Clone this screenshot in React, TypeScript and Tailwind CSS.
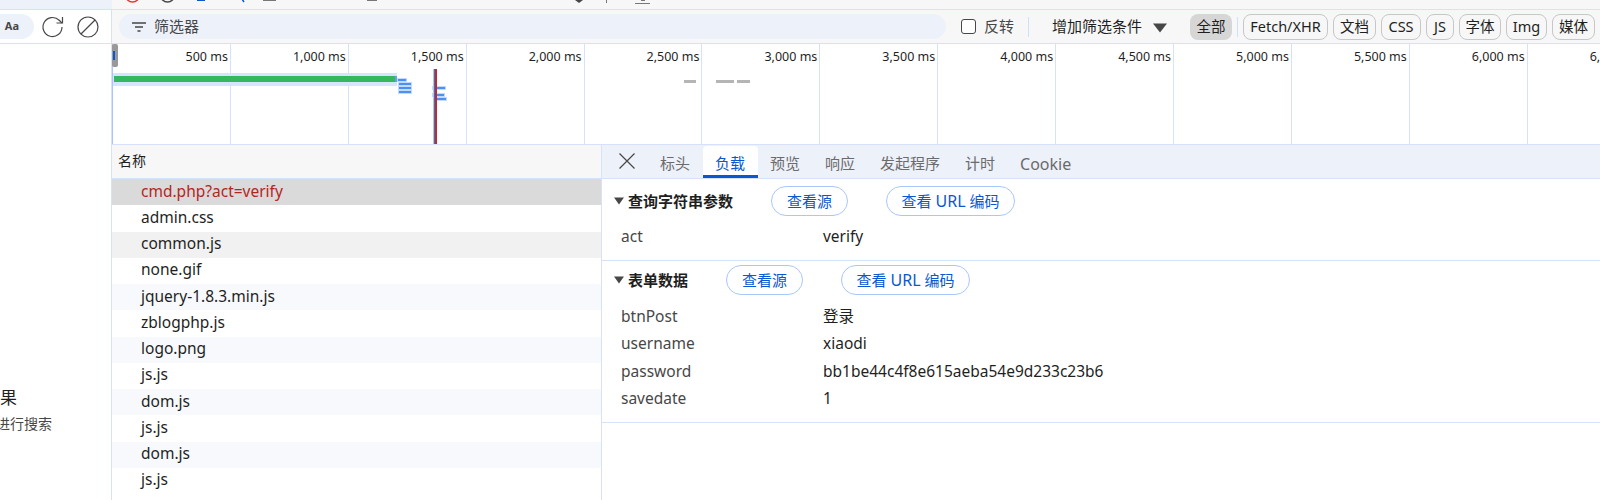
import { Fragment } from "react";

const font = "font-['Noto_Sans','Noto_Sans_CJK_SC',sans-serif]";

const ticks = ["500", "1,000", "1,500", "2,000", "2,500", "3,000", "3,500", "4,000", "4,500", "5,000", "5,500", "6,000", "6,500"];
const files = ["cmd.php?act=verify", "admin.css", "common.js", "none.gif", "jquery-1.8.3.min.js", "zblogphp.js", "logo.png", "js.js", "dom.js", "js.js", "dom.js", "js.js"];
const tabs = ["标头", "负载", "预览", "响应", "发起程序", "计时", "Cookie"];
const chips = [
  { label: "Fetch/XHR", w: "w-[85px]" },
  { label: "文档", w: "w-[43px]" },
  { label: "CSS", w: "w-[40px]" },
  { label: "JS", w: "w-[28px]" },
  { label: "字体", w: "w-[42px]" },
  { label: "Img", w: "w-[41px]" },
  { label: "媒体", w: "w-[43px]" },
  { label: "清单", w: "w-[43px]" },
];
const formRows = [
  ["btnPost", "登录"],
  ["username", "xiaodi"],
  ["password", "bb1be44c4f8e615aeba54e9d233c23b6"],
  ["savedate", "1"],
];
// small waterfall bars: x, y, width
const bars = [
  [286, 35, 8],
  [287, 39, 12],
  [287, 43, 12],
  [287, 47, 12],
  [321, 43, 12],
  [321, 50, 11],
  [323, 54, 11],
];

function rowClass(i: number) {
  if (i === 0) return "bg-[#dadada] text-[#b3261e]";
  if (i === 2) return "bg-[#f1f1f1] text-[#1f1f1f]";
  if (i % 2 === 0) return "bg-[#f7f9fd] text-[#1f1f1f]";
  return "bg-white text-[#1f1f1f]";
}

function SectionHead({ title, first, second }: { title: string; first: string; second: string }) {
  return (
    <div className="flex items-center h-[30px] pl-[12px]">
      <svg width="10" height="8" viewBox="0 0 10 8" className="mr-[4px]">
        <path d="M0 0.5h10L5 7.5z" fill="#474747" />
      </svg>
      <span className="text-[15px] font-bold text-[#1f1f1f]">{title}</span>
      <button className={`${first} h-[30px] rounded-full border border-[#a8c7fa] text-[15px] text-[#0b57d0]`}>查看源</button>
      <button className={`${second} w-[129px] h-[30px] rounded-full border border-[#a8c7fa] text-[15px] text-[#0b57d0]`}>
        查看 <span className="text-[16px]">URL</span> 编码
      </button>
    </div>
  );
}

function KeyValue({ k, v }: { k: string; v: string }) {
  return (
    <div className="flex items-center h-[27.2px] pl-[19px] text-[15.5px]">
      <span className="w-[202px] text-[#474747]">{k}</span>
      <span className="text-[#1f1f1f]">{v}</span>
    </div>
  );
}

export default function App() {
  return (
    <div className={`${font} w-[1600px] h-[500px] overflow-hidden flex flex-col bg-white`}>
      {/* browser chrome, cut off by the crop */}
      <div className="h-[10px] shrink-0 flex bg-[#f7f7f7] border-b border-[#d6e2fb] relative overflow-hidden">
        <div className="w-[112px] bg-[#edf2fa]" />
        <svg width="600" height="10" className="absolute left-[112px] top-0">
          <circle cx="20.5" cy="-5" r="7" fill="none" stroke="#e53935" strokeWidth="1.5" />
          <circle cx="55.5" cy="-5" r="7" fill="none" stroke="#474747" strokeWidth="1.5" />
          <rect x="85" y="0" width="8" height="1" fill="#0b57d0" />
          <path d="M130 -1l2 3" stroke="#0b57d0" strokeWidth="1.5" />
          <rect x="151" y="0" width="13" height="1" fill="#777" />
          <rect x="255" y="0" width="10" height="1" fill="#777" />
          <path d="M463 0h8l-4 3z" fill="#474747" />
          <rect x="494" y="0" width="1" height="3" fill="#777" />
          <rect x="523" y="3" width="15" height="1" fill="#777" />
          <rect x="529" y="0" width="4" height="1" fill="#777" />
        </svg>
      </div>

      <div className="flex-1 flex min-h-0">
        {/* left sidebar */}
        <div className="w-[112px] shrink-0 flex flex-col border-r border-[#d6e2fb]">
          <div className="h-[34px] shrink-0 flex items-center border-b border-[#d6e2fb]">
            <div className="w-[34px] h-[25px] bg-[#edf2fa] rounded-r-full flex items-center justify-end pr-[15px] text-[11px] font-bold text-[#474747]">Aa</div>
            <svg width="24" height="24" viewBox="0 0 24 24" fill="none" stroke="#474747" strokeWidth="1.2" className="ml-[7px]">
              <path d="M21 12a9.5 9.5 0 1 1-2.8-6.7L21 8" />
              <path d="M21.5 2v6h-6" />
            </svg>
            <svg width="24" height="24" viewBox="0 0 24 24" fill="none" stroke="#474747" strokeWidth="1.2" className="ml-[11px]">
              <circle cx="12" cy="12" r="10" />
              <path d="M5 19L19 5" />
            </svg>
          </div>
          <div className="flex-1 flex flex-col overflow-hidden pt-[342px]">
            <div className="text-[17px] leading-[24px] text-[#1f1f1f]">果</div>
            <div className="-ml-[4px] mt-[4px] whitespace-nowrap text-[14px] leading-[20px] text-[#474747]">进行搜索</div>
          </div>
        </div>

        <div className="flex-1 min-w-0 flex flex-col">
          {/* filter bar */}
          <div className="h-[34px] shrink-0 flex items-center pl-[7px] bg-[#f7f7f7] border-b border-[#d6e2fb] text-[#474747] whitespace-nowrap overflow-hidden">
            <div className="w-[827px] h-[25px] shrink-0 rounded-full bg-[#edf1fa] flex items-center pl-[13px]">
              <svg width="14" height="10" viewBox="0 0 14 10" stroke="#474747" strokeWidth="1.4">
                <path d="M0 1h14M3 5h8M5.5 9h3" />
              </svg>
              <span className="ml-[8px] text-[15px]">筛选器</span>
            </div>
            <span className="ml-[15px] w-[15px] h-[15px] shrink-0 rounded-[3px] border border-[#474747] bg-white" />
            <span className="ml-[8px] shrink-0 text-[15px]">反转</span>
            <span className="ml-[14px] w-px h-[20px] shrink-0 bg-[#cfe0fb]" />
            <span className="ml-[23px] shrink-0 text-[15px] text-[#1f1f1f]">增加筛选条件</span>
            <svg width="14" height="10" viewBox="0 0 14 10" className="ml-[11px] mt-[3px] shrink-0">
              <path d="M0 0.5h14L7 9.5z" fill="#474747" />
            </svg>
            <span className="ml-[23px] w-[42px] h-[26px] shrink-0 rounded-[8px] bg-[#d6d6d6] text-[14.5px] text-[#1f1f1f] flex items-center justify-center">全部</span>
            <span className="ml-[5px] w-px h-[20px] shrink-0 bg-[#cfe0fb]" />
            <div className="ml-[5px] flex gap-[5px] shrink-0">
              {chips.map((c) => (
                <span key={c.label} className={`${c.w} h-[26px] shrink-0 rounded-[8px] border border-[#c7c7c7] text-[14.5px] text-[#1f1f1f] flex items-center justify-center`}>
                  {c.label}
                </span>
              ))}
            </div>
          </div>

          {/* timeline */}
          <div className="h-[101px] shrink-0 relative flex border-b border-[#d6e2fb] overflow-hidden">
            <div className="w-[1px] shrink-0 bg-[#a8c7fa]" />
            {ticks.map((t) => (
              <div key={t} className="w-[117.9px] shrink-0 border-r border-[#d6e2fb] pt-[4px] pr-[2px] text-right text-[12.5px] leading-[18px] text-[#1f1f1f] whitespace-nowrap">
                {t} ms
              </div>
            ))}
            <svg width="1488" height="100" className="absolute left-0 top-0">
              <rect x="0" y="0" width="6" height="23" rx="2" fill="#999" />
              <rect x="1" y="7" width="2" height="9" fill="#0b57d0" />
              <rect x="1" y="29" width="284" height="13" fill="#d6e4fc" />
              <rect x="2" y="32" width="281" height="6" fill="#34b85f" />
              <rect x="283" y="32" width="2" height="6" fill="#6c9eea" />
              {bars.map(([x, y, w]) => (
                <Fragment key={`${x}-${y}`}>
                  <rect x={x - 1} y={y - 1} width={w + 2} height="4" fill="#c4dafb" />
                  <rect x={x} y={y} width={w} height="2" fill="#4a90f5" />
                </Fragment>
              ))}
              <rect x="321" y="25" width="1" height="75" fill="#a8c7fa" />
              <rect x="322" y="25" width="1" height="75" fill="#3f6fc4" />
              <rect x="323" y="25" width="2" height="75" fill="#c62828" />
              <rect x="572" y="36" width="12" height="3" fill="#b5b5b5" />
              <rect x="604" y="36" width="18" height="3" fill="#b5b5b5" />
              <rect x="625" y="36" width="13" height="3" fill="#b5b5b5" />
            </svg>
          </div>

          <div className="flex-1 min-h-0 flex">
            {/* request list */}
            <div className="w-[490px] shrink-0 border-r border-[#d6e2fb] flex flex-col overflow-hidden">
              <div className="h-[34px] shrink-0 flex items-center pl-[6px] pb-[2px] bg-[#f7f7f7] border-b border-[#d6e2fb] text-[14px] text-[#1f1f1f]">名称</div>
              {files.map((f, i) => (
                <div key={i} className={`${rowClass(i)} h-[26.25px] shrink-0 flex items-center pl-[29px] pb-[2px] text-[15.5px]`}>
                  {f}
                </div>
              ))}
            </div>

            {/* detail panel */}
            <div className="flex-1 min-w-0 flex flex-col">
              <div className="h-[34px] shrink-0 flex items-end bg-[#edf1fa] border-b border-[#d6e2fb] text-[15px] text-[#6b6b6b]">
                <svg width="16" height="16" viewBox="0 0 16 16" stroke="#474747" strokeWidth="1.2" className="ml-[17px] mb-[9px] mr-[12.5px]">
                  <path d="M0.5 0.5l15 15M15.5 0.5l-15 15" />
                </svg>
                {tabs.map((t) => (
                  <Fragment key={t}>
                    {t === "负载" ? (
                      <div className="h-[32px] w-[55px] pt-[5px] bg-white rounded-t-[4px] border-b-[3px] border-[#0b57d0] text-[#0b57d0] flex items-center justify-center">{t}</div>
                    ) : (
                      <div className={`h-[32px] px-[12.5px] pt-[3px] flex items-center ${t === "Cookie" ? "text-[16px]" : ""}`}>{t}</div>
                    )}
                  </Fragment>
                ))}
              </div>

              <div className="pt-[7px] pb-[10px] border-b border-[#d6e2fb]">
                <SectionHead title="查询字符串参数" first="ml-[38px] w-[77px]" second="ml-[38px]" />
                <div className="mt-[7px]">
                  <KeyValue k="act" v="verify" />
                </div>
              </div>

              <div className="pt-[4px] pb-[10px] border-b border-[#d6e2fb]">
                <SectionHead title="表单数据" first="ml-[38px] w-[77px]" second="ml-[38px]" />
                <div className="mt-[8px]">
                  {formRows.map(([k, v]) => (
                    <KeyValue key={k} k={k} v={v} />
                  ))}
                </div>
              </div>
            </div>
          </div>
        </div>
      </div>
    </div>
  );
}
